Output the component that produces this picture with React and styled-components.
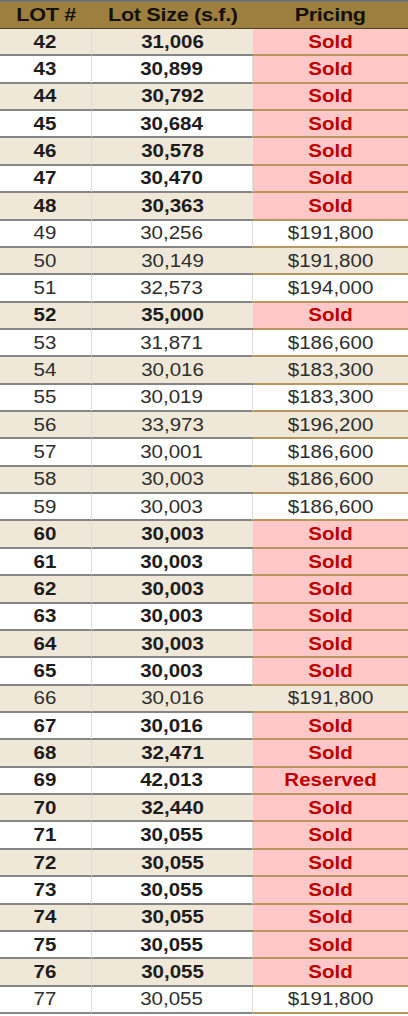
import React from 'react';
import styled, { createGlobalStyle } from 'styled-components';

const GlobalStyle = createGlobalStyle`
  html, body {
    margin: 0;
    padding: 0;
    background: #ffffff;
  }
  body {
    font-family: "Liberation Sans", Arial, sans-serif;
  }
`;

const lots = [
  [42, '31,006', null],
  [43, '30,899', null],
  [44, '30,792', null],
  [45, '30,684', null],
  [46, '30,578', null],
  [47, '30,470', null],
  [48, '30,363', null],
  [49, '30,256', '$191,800'],
  [50, '30,149', '$191,800'],
  [51, '32,573', '$194,000'],
  [52, '35,000', null],
  [53, '31,871', '$186,600'],
  [54, '30,016', '$183,300'],
  [55, '30,019', '$183,300'],
  [56, '33,973', '$196,200'],
  [57, '30,001', '$186,600'],
  [58, '30,003', '$186,600'],
  [59, '30,003', '$186,600'],
  [60, '30,003', null],
  [61, '30,003', null],
  [62, '30,003', null],
  [63, '30,003', null],
  [64, '30,003', null],
  [65, '30,003', null],
  [66, '30,016', '$191,800'],
  [67, '30,016', null],
  [68, '32,471', null],
  [69, '42,013', 'Reserved'],
  [70, '32,440', null],
  [71, '30,055', null],
  [72, '30,055', null],
  [73, '30,055', null],
  [74, '30,055', null],
  [75, '30,055', null],
  [76, '30,055', null],
  [77, '30,055', '$191,800'],
];

const Page = styled.div`
  width: 408px;
  height: 1016px;
  background: #ffffff;
  overflow: hidden;
`;

const Table = styled.div`
  display: grid;
  grid-template-rows: 28px repeat(36, 1fr);
  height: 1014px;
  border-top: 1px solid #6e6e6e;
  box-sizing: border-box;
`;

const HeaderRow = styled.div`
  display: grid;
  grid-template-columns: 92px 161px 1fr;
  background: #9d8040;
  border-top: 1px solid #7a7a7a;
  border-bottom: 1px solid #4d4328;
`;

const HeadCell = styled.div`
  display: flex;
  align-items: center;
  justify-content: center;
  font-weight: 700;
  font-size: 19px;
  letter-spacing: -0.3px;
  color: #15120e;
`;

const Row = styled.div`
  display: grid;
  grid-template-columns: 92px 161px 1fr;
  background: ${(p) => (p.$alt ? '#efe7d7' : '#ffffff')};
`;

const Cell = styled.div`
  display: flex;
  align-items: center;
  justify-content: center;
  border-bottom: 2px solid ${(p) => (p.$price ? '#b8975f' : '#858585')};
  border-right: ${(p) => (p.$divider ? '1px solid #dcdcdc' : 'none')};
  background: ${(p) => (p.$pink ? '#ffc8c8' : 'transparent')};
  font-size: 18px;
  font-weight: ${(p) => (p.$bold ? 700 : 400)};
  color: ${(p) => (p.$red ? '#c00000' : p.$bold ? '#1c1c1c' : '#2e2e2e')};
  padding-top: 1px;
`;

const Text = styled.span`
  display: inline-block;
  transform: scaleX(1.14);
  white-space: nowrap;
`;

export default function App() {
  return (
    <Page>
      <GlobalStyle />
      <Table>
        <HeaderRow>
          <HeadCell><Text>LOT #</Text></HeadCell>
          <HeadCell><Text>Lot Size (s.f.)</Text></HeadCell>
          <HeadCell><Text>Pricing</Text></HeadCell>
        </HeaderRow>
        {lots.map(([lot, size, price], i) => {
          const taken = price === null || price === 'Reserved';
          const alt = i % 2 === 0;
          return (
            <Row key={lot} $alt={alt}>
              <Cell $bold={taken} $divider>
                <Text>{lot}</Text>
              </Cell>
              <Cell $bold={taken} $divider={!alt}>
                <Text>{size}</Text>
              </Cell>
              <Cell $price $pink={taken} $bold={taken} $red={taken}>
                <Text>{price || 'Sold'}</Text>
              </Cell>
            </Row>
          );
        })}
      </Table>
    </Page>
  );
}
